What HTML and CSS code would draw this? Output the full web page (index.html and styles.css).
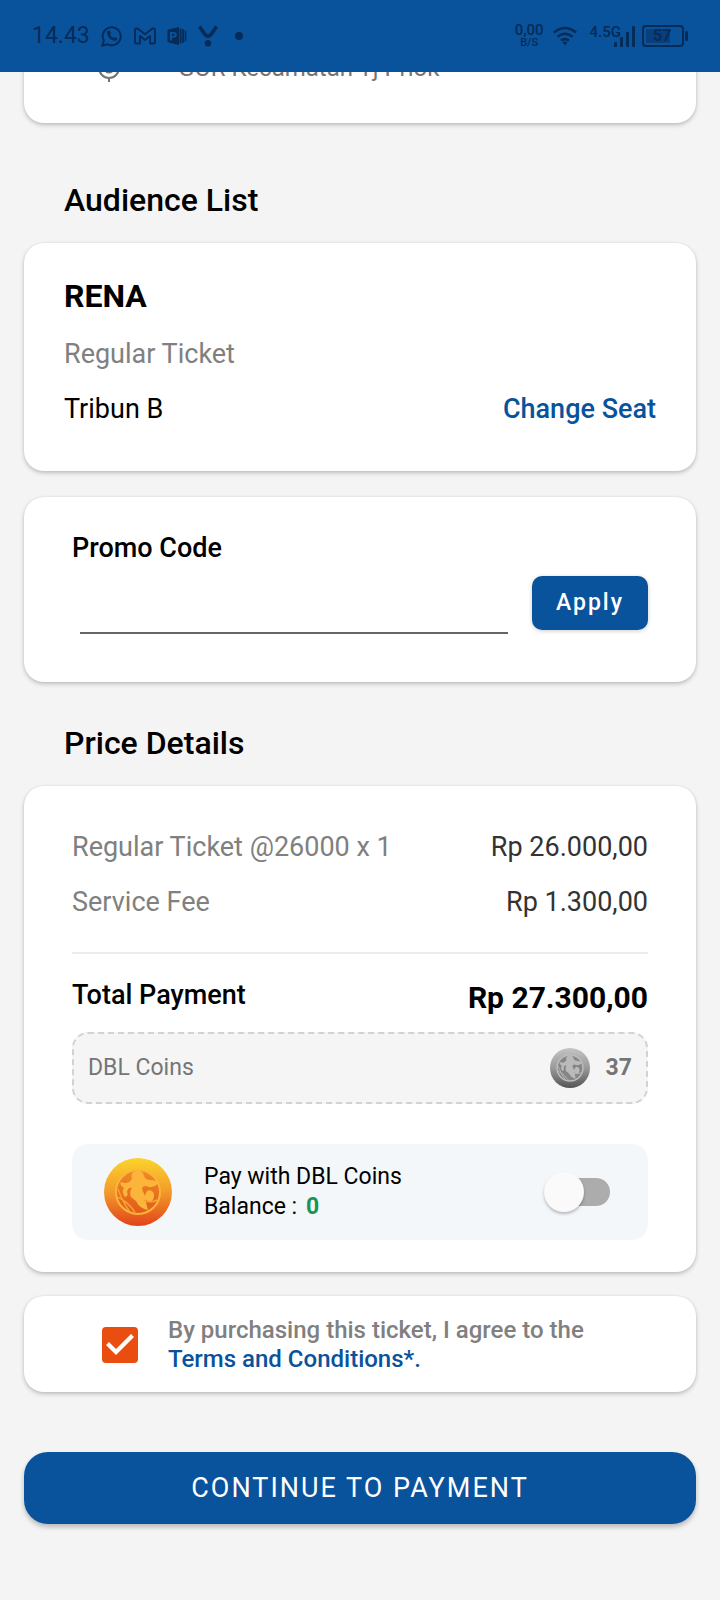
FILE: index.html
```html
<!DOCTYPE html>
<html lang="en">
<head>
<meta charset="utf-8">
<meta name="viewport" content="width=device-width, initial-scale=1">
<title>Ticket payment</title>
<link rel="stylesheet" href="styles.css">
</head>
<body>
<header class="status">
  <div class="status-left">
    <span class="clock">14.43</span>
    <svg width="22" height="22" viewBox="0 0 22 22" fill="none" stroke="currentColor" stroke-width="2"><path d="M1.500 20.500 2.800 15.500A9 9 0 1 1 6.500 19.200Z"/><path d="M7.300 5.800 8.800 5.600 9.900 8.300 9 9.600C9.800 11.400 11 12.400 12.600 13.100L13.900 12 16.300 13.300C16.300 14.800 15 16 13.500 15.800 9.500 15.300 6.300 11.600 6.100 8.100 6.100 7 6.500 6.200 7.300 5.800Z" fill="currentColor" stroke="none"/></svg>
    <svg width="22" height="18" viewBox="0 0 22 18" fill="none" stroke="currentColor" stroke-width="1.800" stroke-linejoin="round"><path d="M1 3.200V15.500Q1 16.500 2 16.500H6V9L11 13 16 9V16.500H20Q21 16.500 21 15.500V3.200Q21 1.500 19.500 1.500H18.500L11 7.200 3.500 1.500H2.500Q1 1.500 1 3.200Z"/></svg>
    <svg width="20" height="20" viewBox="0 0 20 20" fill="currentColor"><path fill-rule="evenodd" d="M1.500 3.500 12 1V19L1.500 16.500Q.5 16.200.5 15V5Q.5 3.800 1.500 3.500ZM3 6V14.500H5V11.800H6.500Q9.800 11.500 9.800 8.800T6.500 6ZM5 7.700H6.300Q7.800 7.800 7.800 8.900T6.300 10.100H5Z"/><path d="M12.600 2.500H14.500V17.500H12.600ZM15.200 3.200H17V16.800H15.200ZM17.700 4Q19.300 4.300 19.300 6V14Q19.300 15.700 17.700 16Z"/></svg>
    <svg width="20" height="22" viewBox="0 0 20 22" fill="none" stroke="currentColor" stroke-width="3.600"><path d="M1.500 1.500 7 9.500Q10 13 13 9.500L18.500 1.500"/><circle cx="10" cy="18.200" r="3.200" fill="currentColor" stroke="none"/></svg>
    <svg class="more" width="8" height="8" viewBox="0 0 8 8" fill="currentColor"><circle cx="4" cy="4" r="4"/></svg>
  </div>
  <div class="status-right">
    <span class="speed"><b>0,00</b><small>B/S</small></span>
    <svg width="24" height="20" viewBox="0 0 24 20" fill="none" stroke="currentColor" stroke-width="2.500"><path d="M1 6.500Q12-2.500 23 6.500M4.500 10.800Q12 4.800 19.500 10.800M8 14.600Q12 11.600 16 14.600"/><path d="M9.500 16.600Q12 14.500 14.500 16.600L12 19.200Z" fill="currentColor" stroke="none"/></svg>
    <span class="network"><b>4.5G</b>
      <svg width="22" height="22" viewBox="0 0 22 22" fill="currentColor"><rect x="0" y="17" width="3" height="5" rx="1"/><rect x="6" y="12" width="3" height="10" rx="1"/><rect x="12" y="7" width="3" height="15" rx="1"/><rect x="18" y="1" width="3" height="21" rx="1"/></svg>
    </span>
    <span class="battery"><span class="battery-level">57</span></span>
  </div>
</header>

<main class="page">
  <section class="card venue">
    <svg width="22" height="30" viewBox="0 0 22 30" fill="none" stroke="currentColor" stroke-width="2"><circle cx="11" cy="15" r="10"/><circle cx="11" cy="15" r="4.500"/><path d="M11 0V5M11 25V29"/></svg>
    <span>GOR Kecamatan Tj Priok</span>
  </section>

  <h2 class="heading heading-first">Audience List</h2>
  <section class="card audience">
    <h3 class="name">RENA</h3>
    <p class="muted">Regular Ticket</p>
    <div class="row seat"><span>Tribun B</span><a class="link" href="#seat">Change Seat</a></div>
  </section>

  <form class="card promo">
    <label for="promo">Promo Code</label>
    <div class="promo-row">
      <input id="promo" type="text">
      <button class="apply" type="button">Apply</button>
    </div>
  </form>

  <h2 class="heading">Price Details</h2>
  <section class="card price">
    <dl class="lines">
      <div class="row"><dt>Regular Ticket @26000 x 1</dt><dd>Rp 26.000,00</dd></div>
      <div class="row"><dt>Service Fee</dt><dd>Rp 1.300,00</dd></div>
      <div class="row total"><dt>Total Payment</dt><dd>Rp 27.300,00</dd></div>
    </dl>
    <div class="coins">
      <span>DBL Coins</span>
      <svg class="coin-gray" width="40" height="40" viewBox="0 0 68 68">
        <defs>
          <linearGradient id="gray" x1="0" y1="0" x2="0" y2="1"><stop offset="0" stop-color="#c4c4c4"/><stop offset=".5" stop-color="#9a9a9a"/><stop offset="1" stop-color="#555"/></linearGradient>
        </defs>
        <circle cx="34" cy="34" r="34" fill="url(#gray)"/>
        <circle cx="34" cy="34" r="22" fill="#858585" stroke="#bdbdbd" stroke-width="2.500"/>
        <use href="#player" fill="#bababa" stroke="#bababa"/>
      </svg>
      <b>37</b>
    </div>
    <div class="pay">
      <svg width="68" height="68" viewBox="0 0 68 68">
        <defs>
          <linearGradient id="gold" x1="0" y1="0" x2="0" y2="1"><stop offset="0" stop-color="#fbd42c"/><stop offset=".5" stop-color="#f39a2b"/><stop offset="1" stop-color="#e2431a"/></linearGradient>
          <linearGradient id="core" x1="0" y1="0" x2="0" y2="1"><stop offset="0" stop-color="#ee8d20"/><stop offset="1" stop-color="#e35a1c"/></linearGradient>
          <g id="player">
            <path stroke="none" d="M28 21Q26 14 32 13Q39 12 40 18Q42 22 46 22Q53 22 54 26Q48 31 42 28Q38 28 38 31L41 38Q42 33 45 32Q51 33 50 39Q49 44 45 43Q42 43 41 41L44 52Q36 51 32 43L27 39Q25 34 28 30Q24 29 23 34Q25 38 21 39Q17 34 20 30Q15 27 17 24Q24 27 28 21Z"/>
            <path fill="none" stroke-width="1.500" d="M13 39Q22 42 31 54M14 31Q18 43 26 54M40 43Q48 45 53 42"/>
          </g>
        </defs>
        <circle cx="34" cy="34" r="34" fill="url(#gold)"/>
        <circle cx="34" cy="34" r="22" fill="url(#core)" stroke="#fbb53a" stroke-width="2"/>
        <use href="#player" fill="#fbb53a" stroke="#f9a234"/>
      </svg>
      <label class="pay-text" for="use-coins">Pay with DBL Coins<br>Balance : <b>0</b></label>
      <input class="switch" id="use-coins" type="checkbox" role="switch">
    </div>
  </section>

  <section class="card terms">
    <input class="check" id="agree" type="checkbox" checked>
    <label for="agree">By purchasing this ticket, I agree to the <a class="link" href="#terms">Terms and Conditions*.</a></label>
  </section>

  <button class="continue" type="button">CONTINUE TO PAYMENT</button>
</main>
</body>
</html>
```

FILE: styles.css
```css
* { box-sizing: border-box; }

body {
  margin: 0;
  background: #f4f4f4;
  color: #000;
  font: 400 27px/34px Roboto, "Liberation Sans", sans-serif;
}

h2, h3, p, dl, dd { margin: 0; }
svg { display: block; flex: none; }
button, input { font: inherit; }

.status {
  position: relative;
  z-index: 1;
  display: flex;
  justify-content: space-between;
  height: 72px;
  padding: 0 32px;
  background: #09529c;
  color: #062b57;
}
.status-left, .status-right { display: flex; align-items: center; }
.status-left { gap: 11px; }
.status-right { gap: 9px; }
.clock { font-size: 23px; }
.more { margin-left: 6px; }
.speed { display: flex; flex-direction: column; align-items: center; font-weight: 500; }
.speed b { font-size: 15px; line-height: 13px; font-weight: 500; }
.speed small { font-size: 11px; line-height: 12px; }
.network { display: flex; align-items: center; margin-left: 4px; }
.network b { align-self: flex-start; margin: -5px -7px 0 0; font-size: 15px; line-height: 24px; font-weight: 500; }
.battery {
  position: relative;
  width: 42px;
  height: 22px;
  margin: 0 4px 0 -3px;
  padding: 2px;
  border: 2px solid;
  border-radius: 4px;
}
.battery::after {
  content: "";
  position: absolute;
  right: -6px;
  top: 4px;
  width: 3px;
  height: 10px;
  border-radius: 2px;
  background: currentColor;
}
.battery-level {
  display: block;
  width: 24px;
  padding-left: 7px;
  background: #083f7c;
  font-size: 16px;
  line-height: 14px;
  font-weight: 700;
}

.page {
  display: flex;
  flex-direction: column;
  padding: 0 24px 76px;
}

.card {
  border-radius: 20px;
  background: #fff;
  box-shadow: 0 2px 4px rgba(0, 0, 0, .22), 0 0 2px rgba(0, 0, 0, .08);
}

.row { display: flex; justify-content: space-between; gap: 16px; }
.link { color: #09529c; font-weight: 500; text-decoration: none; }
.muted { color: #808080; }

.venue {
  display: flex;
  align-items: center;
  gap: 58px;
  margin-top: -33px;
  padding: 12px 40px 38px 74px;
  color: #757575;
  font-size: 24px;
}

.heading {
  margin: 42px 0 24px 40px;
  font-size: 32px;
  line-height: 38px;
  font-weight: 500;
}
.heading-first { margin-top: 58px; }

.audience {
  display: flex;
  flex-direction: column;
  gap: 21px;
  padding: 34px 40px 45px;
}
.name { margin-bottom: 1px; font-size: 32px; line-height: 38px; font-weight: 700; }

.promo {
  display: flex;
  flex-direction: column;
  gap: 11px;
  margin-top: 26px;
  padding: 34px 48px 48px;
  font-weight: 500;
}
.promo-row { display: flex; align-items: flex-start; gap: 24px; padding-left: 8px; }
.promo-row input {
  flex: 1;
  min-width: 0;
  height: 58px;
  padding: 0;
  border: 0;
  border-bottom: 2px solid #666;
  background: none;
  outline: 0;
}
.apply, .continue {
  border: 0;
  background: #09529c;
  color: #fff;
  box-shadow: 0 3px 5px rgba(0, 0, 0, .25);
}
.apply {
  height: 54px;
  padding: 0 24px;
  border-radius: 10px;
  font-size: 23px;
  letter-spacing: 2px;
  box-shadow: 0 1px 4px rgba(0, 0, 0, .2);
}

.price { padding: 44px 48px 32px; }
.lines { display: flex; flex-direction: column; gap: 21px; }
.lines dt { color: #808080; }
.lines dd { color: #333; }
.total {
  margin-top: 12px;
  padding-top: 24px;
  border-top: 2px solid #ededed;
}
.total dt { color: #000; font-weight: 500; }
.total dd { color: #000; font-size: 30px; line-height: 40px; font-weight: 700; }

.coins {
  display: flex;
  align-items: center;
  gap: 16px;
  height: 72px;
  margin: 14px 0 40px;
  padding: 0 14px;
  border: 2px dashed #d2d2d2;
  border-radius: 16px;
  background: #f5f5f5;
  color: #757575;
  font-size: 23px;
}
.coin-gray { margin-left: auto; }

.pay {
  display: flex;
  align-items: center;
  min-height: 96px;
  padding: 0 38px 0 32px;
  border-radius: 16px;
  background: #f4f7fa;
}
.pay-text { flex: 1; margin-left: 32px; font-size: 23px; line-height: 30px; }
.pay-text b { margin-left: 3px; color: #199356; }

.switch {
  appearance: none;
  display: flex;
  align-items: center;
  flex: none;
  width: 58px;
  height: 28px;
  margin: 0;
  border-radius: 14px;
  background: #acacac;
}
.switch::before {
  content: "";
  flex: none;
  width: 40px;
  height: 40px;
  margin-left: -8px;
  border-radius: 50%;
  background: #fafafa;
  box-shadow: 0 2px 3px rgba(0, 0, 0, .25);
}
.switch:checked { justify-content: flex-end; background: #09529c; }

.terms {
  display: flex;
  align-items: center;
  gap: 30px;
  margin-top: 24px;
  padding: 20px 78px 18px;
  color: #808080;
  font-size: 24px;
  line-height: 29px;
  font-weight: 500;
}
.terms label { max-width: 440px; }
.check {
  appearance: none;
  flex: none;
  width: 36px;
  height: 36px;
  margin: 0;
  border-radius: 4px;
  border: 3px solid #ea4d10;
}
.check:checked { border: 0; background: #ea4d10; }
.check:checked::before {
  content: "";
  display: block;
  width: 36px;
  height: 36px;
  background: #fff;
  clip-path: polygon(4px 18px, 7px 15px, 14px 22px, 29px 7px, 32px 10px, 14px 28px);
}

.continue {
  height: 72px;
  margin-top: 60px;
  border-radius: 24px;
  font-size: 27px;
  letter-spacing: 2px;
}
```
